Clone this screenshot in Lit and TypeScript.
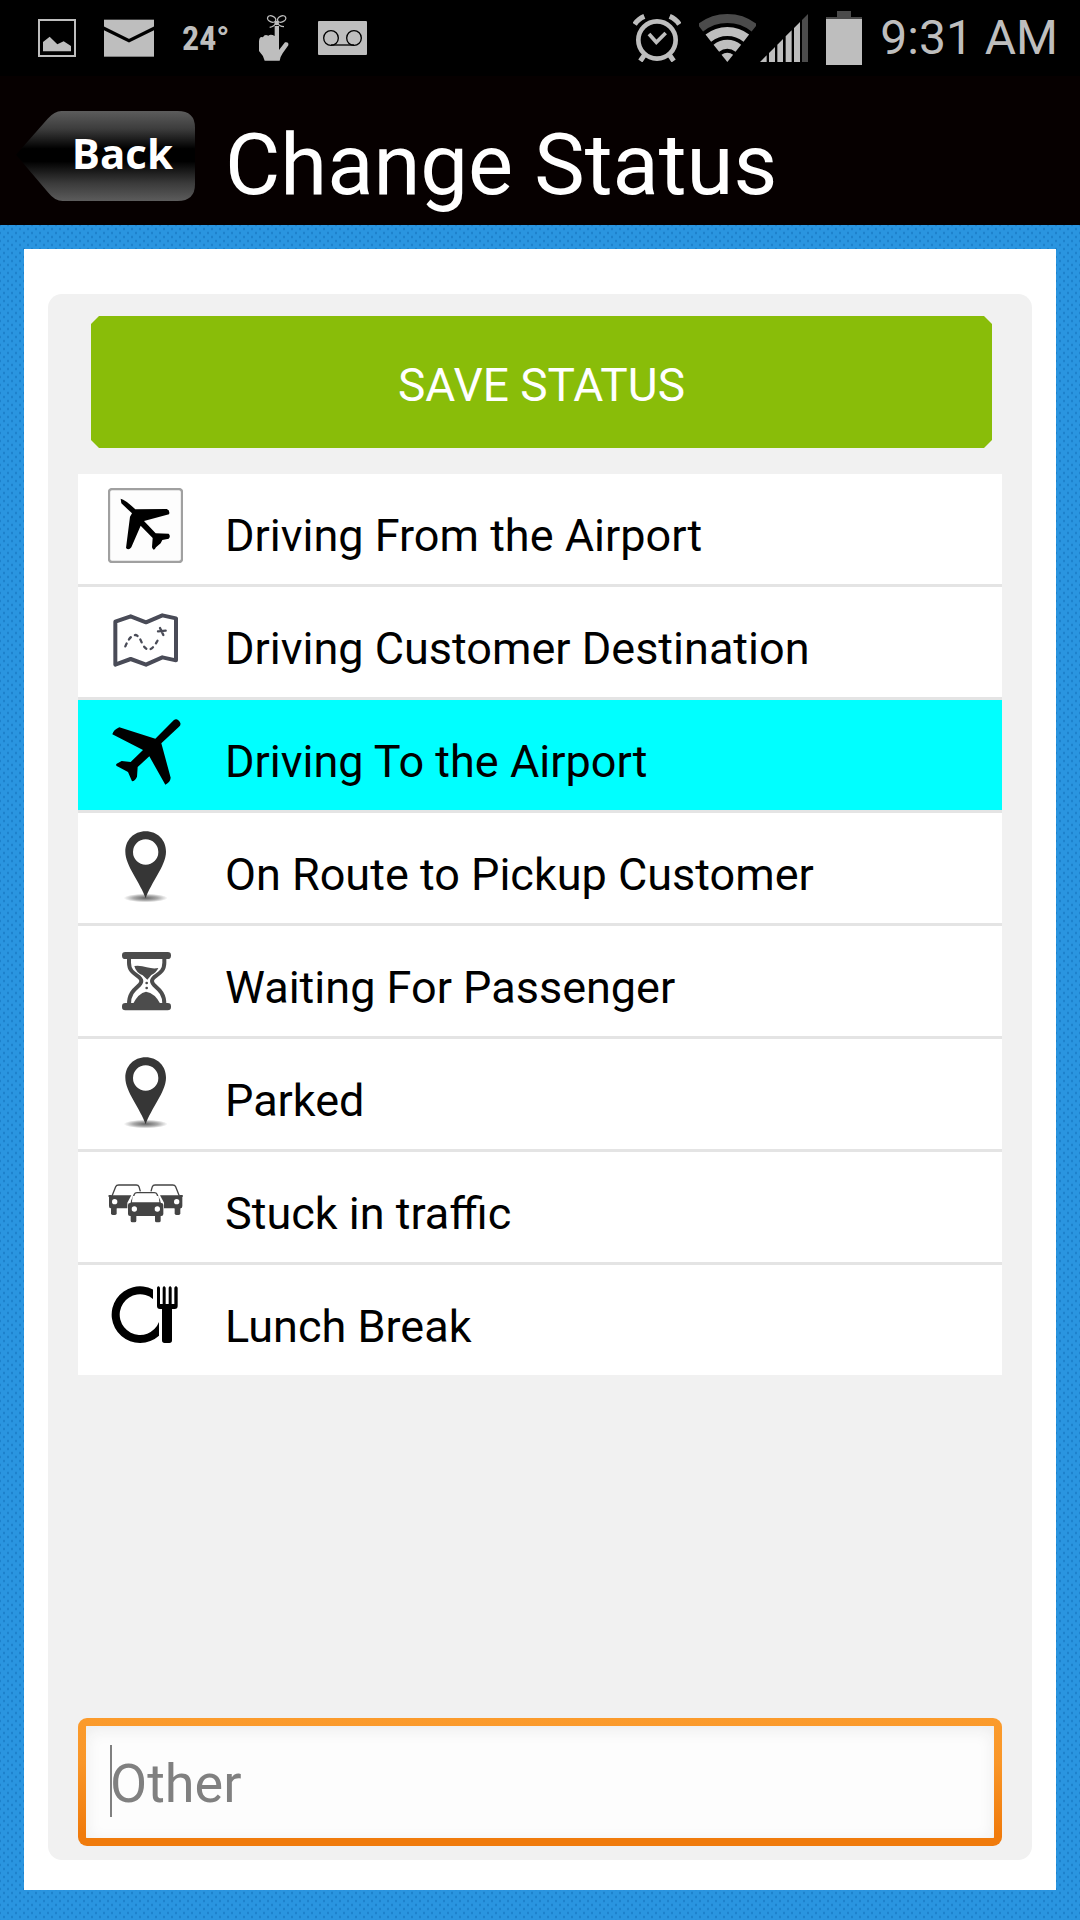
import { LitElement, html, css, svg } from "lit";
import { customElement, state } from "lit/decorators.js";
import { classMap } from "lit/directives/class-map.js";

const planeFrom = svg`
  <rect x="117" y="87" width="219" height="219" rx="9" fill="#fdfdfd" stroke="#a0a0a0" stroke-width="7"/>
  <path d="M152 116Q165 118 196 148L290 147Q301 151 297 163L222 183L257 220L296 221Q303 229 296 236L277 240L272 250L258 262Q251 276 246 262L248 234L212 197L184 262Q176 273 168 264L180 170L186 160L154 130Z" fill="#000"/>`;

const map = svg`
  <path d="M136 485L182 469L228 487L277 466L318 475V601L277 592L228 614L182 597L136 614Z" fill="none" stroke="#494b57" stroke-width="12" stroke-linejoin="round"/>
  <path d="M166 559Q180 525 197 525Q208 528 216 550Q234 585 256 553L268 533" fill="none" stroke="#494b57" stroke-width="7" stroke-linecap="round" stroke-dasharray="9 14"/>
  <path d="M264 514L287 512M270 504L280 525" stroke="#494b57" stroke-width="7" stroke-linecap="round"/>`;

const planeTo = svg`
  <path d="M311 76Q322 67 331 84Q333 90 327 95L274 145L302 248Q301 261 286 269L238 184L203 216L201 245Q196 257 186 259L174 231L146 216Q134 213 140 206L155 198L182 201L219 165L127 118Q130 105 148 97L256 131Z" fill="#000"/>`;

const pin = svg`
  <defs><radialGradient id="ground"><stop offset="0" stop-color="#666"/><stop offset=".55" stop-color="#aaa"/><stop offset="1" stop-color="#fff"/></radialGradient></defs>
  <ellipse cx="227" cy="609" rx="66" ry="13" fill="url(#ground)"/>
  <path fill-rule="evenodd" d="M227 409C263 409 288 436 288 470C288 512 242 564 227 610C212 564 166 512 166 470C166 436 191 409 227 409ZM227 433A38 38 0 1 0 227 509A38 38 0 1 0 227 433Z" fill="#363636"/>`;

const hourglass = svg`
  <g fill="#4c4c4c">
    <rect x="156" y="66" width="147" height="21" rx="10"/>
    <rect x="156" y="219" width="147" height="22" rx="10"/>
    <path d="M177 84V98C177 136 214 134 214 153C214 172 177 174 177 222M283 84V98C283 136 246 134 246 153C246 172 283 174 283 222" fill="none" stroke="#4c4c4c" stroke-width="12"/>
    <path d="M193 108Q213 106 230 112Q250 117 265 114Q258 129 244 135L232 149L218 136Q198 128 193 108Z"/>
    <circle cx="230" cy="159" r="4"/><circle cx="230" cy="174" r="4"/>
    <path d="M190 220Q205 190 228 185Q255 190 270 220Z"/>
  </g>`;

const rearCar = svg`
  <path d="M126 108L137 80Q139 75 146 75H199Q205 75 207 80L211 94" fill="none" stroke="#444" stroke-width="4"/>
  <path d="M122 106H184L172 128V145H122Q117 145 117 138V112Q117 106 122 106Z" fill="#444"/>
  <rect x="123" y="140" width="17" height="25" rx="5" fill="#444"/>
  <rect x="115" y="105" width="10" height="6" rx="3" fill="#444"/>
  <circle cx="134" cy="125" r="8" fill="#fff"/>`;

const cars = svg`
  ${rearCar}
  <g transform="translate(454 0) scale(-1 1)">${rearCar}</g>
  <path d="M184 125L193 103Q195 98 201 98H253Q259 98 261 103L270 125" fill="#fff" stroke="#444" stroke-width="4"/>
  <rect x="174" y="129" width="106" height="39" rx="6" fill="#444"/>
  <path d="M184 124H270L276 134H178Z" fill="#444"/>
  <path d="M188 108L186 127H268L266 108Z" fill="#fff"/>
  <rect x="182" y="160" width="17" height="27" rx="5" fill="#444"/>
  <rect x="255" y="160" width="17" height="27" rx="5" fill="#444"/>
  <circle cx="193" cy="147" r="8" fill="#fff"/><circle cx="262" cy="147" r="8" fill="#fff"/>`;

const lunch = svg`
  <path d="M249 388.5A85 85 0 1 0 267 527V486A61 61 0 1 1 249 417Z"/>
  <path d="M261 383Q265 375 270 383V432H278V383Q282 375 287 383V432H296V383Q300 375 305 383V432H313V383Q318 375 323 383V438Q323 447 314 447H306V541Q306 549 298 549H284Q276 549 276 541V447H270Q261 447 261 438Z"/>`;

const statuses = [
  { label: "Driving From the Airport", box: "114 84 225 225", icon: planeFrom },
  { label: "Driving Customer Destination", box: "114 423 225 225", icon: map },
  { label: "Driving To the Airport", box: "114 57 225 225", icon: planeTo },
  { label: "On Route to Pickup Customer", box: "114 396 225 225", icon: pin },
  { label: "Waiting For Passenger", box: "114 30 225 225", icon: hourglass },
  { label: "Parked", box: "114 396 225 225", icon: pin },
  { label: "Stuck in traffic", box: "114 18 225 225", icon: cars },
  { label: "Lunch Break", box: "114 357 225 225", icon: lunch },
];

@customElement("status-bar")
class StatusBar extends LitElement {
  static styles = css`
    :host {
      display: flex;
      align-items: center;
      justify-content: space-between;
      height: 76px;
      padding: 0 22px 0 38px;
      box-sizing: border-box;
      background: #000;
      color: #bebebe;
      font-family: Roboto, sans-serif;
    }
    .group { display: flex; align-items: center; }
    .notices { gap: 28px; }
    .system { gap: 18px; }
    .radio { display: flex; gap: 4px; }
    svg { display: block; fill: #bebebe; }
    .dim { fill: #4b4b4b; }
    .temp { font: bold 34px/48px "Liberation Sans Narrow", "Roboto Condensed", sans-serif; }
    .time { font-size: 48px; line-height: 56px; }
  `;
  render() {
    return html`
      <div class="group notices">
        <svg width="38" height="38" viewBox="114 57 114 114">
          <rect x="117" y="60" width="108" height="108" fill="none" stroke="#bebebe" stroke-width="6"/>
          <path d="M129 154V126L149 110L172 133L191 124L213 138V154Z"/>
        </svg>
        <svg width="50" height="38" viewBox="312 57 150 114">
          <rect x="312" y="59" width="150" height="111"/>
          <path d="M306 82L387 122L468 82" fill="none" stroke="#000" stroke-width="10"/>
        </svg>
        <span class="temp">24°</span>
        <svg width="32" height="48" viewBox="771 42 96 144">
          <path d="M821 78H834V150L852 127Q864 125 862 136L845 160Q838 170 836 182H791Q787 166 774 153V124Q775 108 786 112Q790 102 802 107Q809 101 821 108Z"/>
          <g fill="none" stroke="#bebebe" stroke-width="4">
            <ellipse cx="812" cy="57" rx="13" ry="9" transform="rotate(25 812 57)"/>
            <ellipse cx="842" cy="57" rx="13" ry="9" transform="rotate(-25 842 57)"/>
            <path d="M827 66Q820 80 806 82M827 66Q834 80 849 80"/>
          </g>
          <circle cx="827" cy="69" r="7"/>
        </svg>
        <svg width="49" height="34" viewBox="960 60 147 102">
          <rect x="960" y="60" width="147" height="102" rx="3"/>
          <g fill="none" stroke="#000" stroke-width="4">
            <circle cx="999" cy="111" r="22"/><circle cx="1068" cy="111" r="22"/><path d="M999 132H1068"/>
          </g>
        </svg>
      </div>
      <div class="group system">
        <svg width="48" height="48" viewBox="93 39 144 144">
          <g fill="none" stroke="#bebebe">
            <circle cx="165" cy="117" r="56" stroke-width="14"/>
            <path d="M141 99L163 124L191 96" stroke-width="11"/>
            <path d="M98 70Q108 54 127 46M232 70Q222 54 203 46" stroke-width="15"/>
            <path d="M128 161L115 180M202 161L215 180" stroke-width="15"/>
          </g>
        </svg>
        <div class="radio">
          <svg width="57" height="48" viewBox="296 39 171 144">
            <g fill="none" stroke="#bebebe" stroke-width="27">
              <path d="M299.8 80.9A130.5 130.5 0 0 1 462.2 80.9" stroke="#4b4b4b"/>
              <path d="M324 111.4A91.5 91.5 0 0 1 438 111.4"/>
              <path d="M348 141.5A53 53 0 0 1 414 141.5"/>
            </g>
            <path d="M381 183L363.6 161.1A28 28 0 0 1 398.4 161.1Z"/>
          </svg>
          <svg width="48" height="48" viewBox="480 39 144 144">
            <path d="M480 183L500 163V183ZM507 183V156L525 138V183ZM532 183V131L549 114V183ZM557 183V106L575 88V183ZM582 183V81L600 63V183Z"/>
            <path class="dim" d="M606 183V57L624 39V183Z"/>
          </svg>
        </div>
        <svg width="36" height="54" viewBox="678 27 108 162">
          <path class="dim" d="M711 27H753V45H786V51H678V45H711Z"/>
          <rect x="678" y="51" width="108" height="138"/>
        </svg>
        <span class="time">9:31 AM</span>
      </div>`;
  }
}

@customElement("app-root")
class AppRoot extends LitElement {
  @state() private selected = 2;

  static styles = css`
    :host {
      display: flex;
      flex-direction: column;
      min-height: 100vh;
      font-family: Roboto, sans-serif;
      color: #000;
    }
    * { box-sizing: border-box; }
    button { border: 0; margin: 0; font: inherit; cursor: pointer; }
    .header {
      display: flex;
      align-items: flex-start;
      gap: 30px;
      padding: 35px 24px 6px 16px;
      background: #060000;
      color: #fff;
    }
    .back {
      position: relative;
      width: 179px;
      height: 90px;
      padding: 0 22px 6px 0;
      background: none;
      color: #fff;
      font: bold 42px/60px "Open Sans", "Noto Sans", sans-serif;
      text-align: right;
    }
    .shape { position: absolute; inset: 0; }
    .word { position: relative; }
    .title { margin: 0; font-size: 85px; line-height: 108px; font-weight: 400; }
    .page {
      flex: 1;
      display: flex;
      padding: 24px 24px 30px;
      background-color: #2a95e0;
      background-image:
        radial-gradient(ellipse 1px 2px, #1c7fca 50%, transparent),
        radial-gradient(ellipse 1px 2px, #1c7fca 50%, transparent);
      background-size: 8px 8px;
      background-position: 0 0, 4px 4px;
    }
    .sheet {
      flex: 1;
      display: flex;
      padding: 45px 24px 30px;
      background: #fff;
    }
    .panel {
      flex: 1;
      display: flex;
      flex-direction: column;
      padding: 22px 30px 14px;
      border-radius: 14px;
      background: #f1f1f1;
    }
    .save {
      height: 132px;
      margin: 0 10px 26px 13px;
      padding: 6px 0 0;
      background: #89bd09;
      color: #fff;
      font-size: 46px;
      clip-path: polygon(8px 0, calc(100% - 8px) 0, 100% 8px, 100% calc(100% - 8px), calc(100% - 8px) 100%, 8px 100%, 0 calc(100% - 8px), 0 8px);
    }
    .list {
      display: flex;
      flex-direction: column;
      gap: 3px;
      margin: 0 0 24px;
      padding: 0;
      list-style: none;
      background: #e4e4e4;
    }
    .row {
      display: flex;
      align-items: flex-start;
      gap: 42px;
      width: 100%;
      height: 110px;
      padding: 14px 30px 0;
      background: #fff;
      color: #000;
      font-size: 45px;
      line-height: 96px;
      text-align: left;
    }
    .row.on { background: #0ff; }
    .icon { flex: none; display: block; width: 75px; height: 75px; }
    .field { position: relative; margin-top: auto; }
    .other {
      display: block;
      width: 100%;
      height: 128px;
      padding: 2px 24px 0;
      border: 8px solid transparent;
      border-radius: 9px;
      outline: 0;
      background:
        linear-gradient(#fdfdfd, #fdfdfd) padding-box,
        linear-gradient(#fb9b2c 0%, #f99628 35%, #f07b0c 90%) border-box;
      box-shadow: inset 0 4px 16px #ececec;
      font: 54px/64px Roboto, sans-serif;
      color: #000;
    }
    .other::placeholder { color: #808080; opacity: 1; }
    .caret { position: absolute; left: 32px; top: 27px; width: 2px; height: 72px; background: #808080; }
  `;

  render() {
    return html`
      <status-bar></status-bar>
      <header class="header">
        <button class="back">
          <svg class="shape" width="179" height="90" viewBox="48 105 537 270">
            <defs>
              <linearGradient id="sheen" x1="0" y1="0" x2="0" y2="1">
                <stop offset="0" stop-color="#5c5c5c"/>
                <stop offset=".2" stop-color="#3c3c3c"/>
                <stop offset=".42" stop-color="#000"/>
                <stop offset=".56" stop-color="#000"/>
                <stop offset=".8" stop-color="#3a3a3a"/>
                <stop offset="1" stop-color="#5c5c5c"/>
              </linearGradient>
            </defs>
            <path d="M48 236L143 128Q164 105 184 105H533Q585 105 585 155V325Q585 375 533 375H188Q165 375 145 350Z" fill="url(#sheen)"/>
          </svg>
          <span class="word">Back</span>
        </button>
        <h1 class="title">Change Status</h1>
      </header>
      <main class="page">
        <div class="sheet">
          <section class="panel">
            <button class="save">SAVE STATUS</button>
            <ul class="list">
              ${statuses.map(
                (s, i) => html`<li>
                  <button
                    class=${classMap({ row: true, on: i === this.selected })}
                    aria-pressed=${i === this.selected ? "true" : "false"}
                    @click=${() => (this.selected = i)}
                  >
                    <svg class="icon" viewBox=${s.box} aria-hidden="true">${s.icon}</svg>
                    <span>${s.label}</span>
                  </button>
                </li>`
              )}
            </ul>
            <div class="field">
              <input class="other" type="text" placeholder="Other" aria-label="Other" />
              <span class="caret"></span>
            </div>
          </section>
        </div>
      </main>`;
  }
}
